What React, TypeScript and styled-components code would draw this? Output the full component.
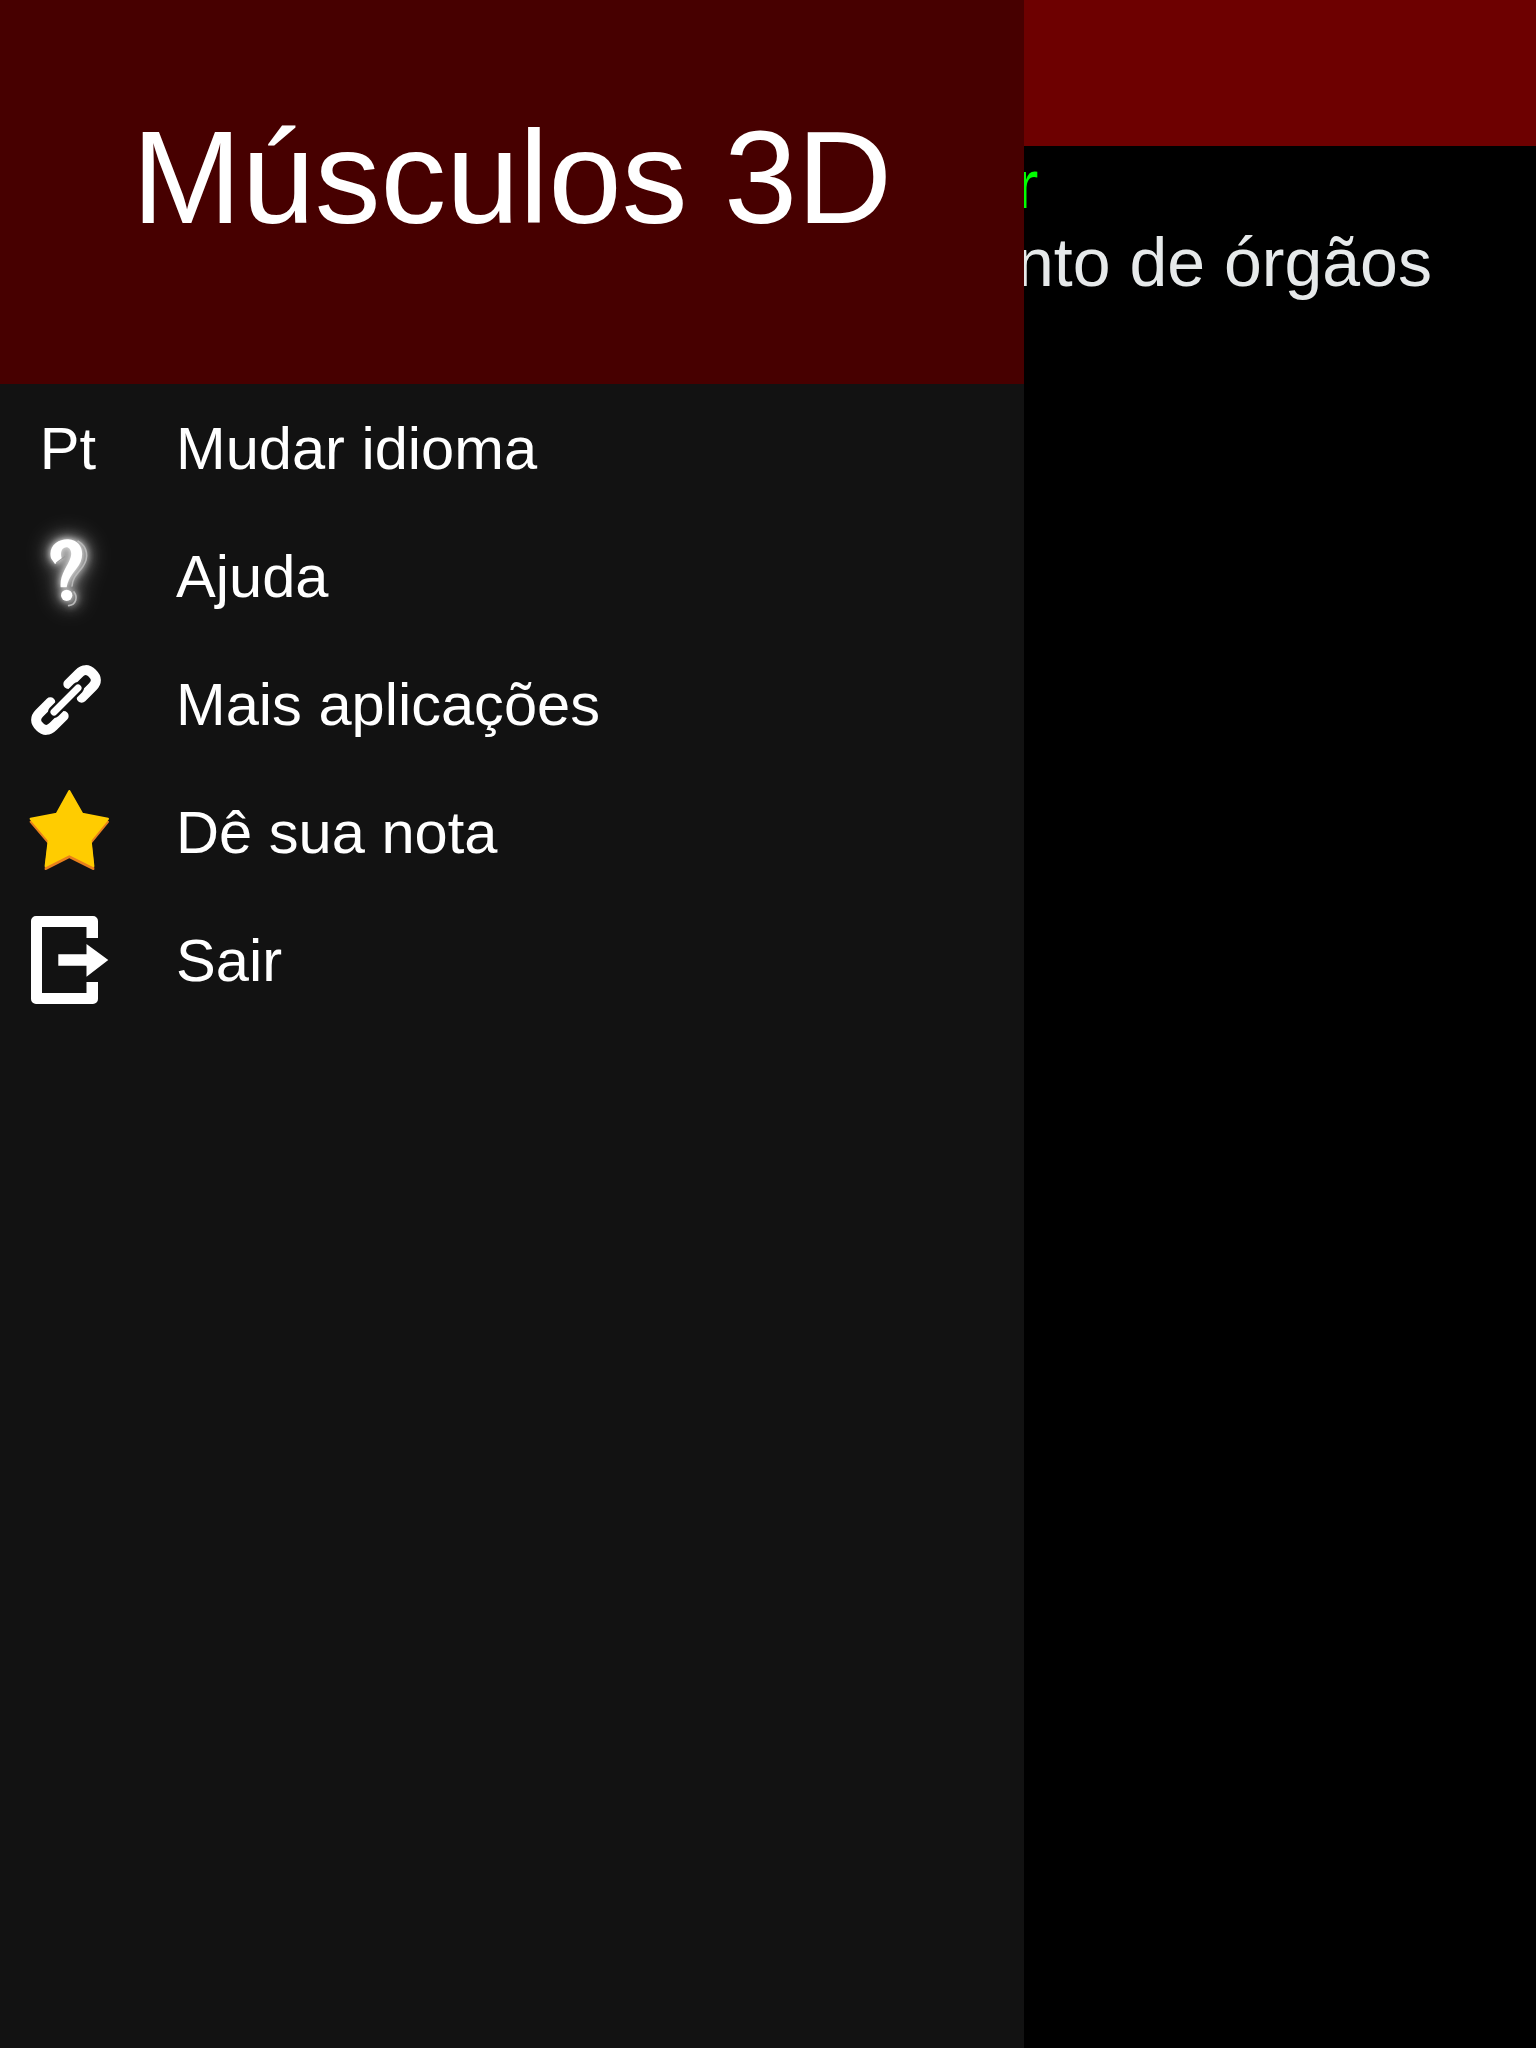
import { createGlobalStyle } from "styled-components";
import styled from "styled-components";

const GlobalStyle = createGlobalStyle`
  html, body {
    margin: 0;
    padding: 0;
    background: #000;
    font-family: "Liberation Sans", Arial, sans-serif;
  }
`;

const Page = styled.div`
  position: relative;
  width: 1536px;
  height: 2048px;
  overflow: hidden;
  background: #000;
`;

const TopBar = styled.div`
  height: 146px;
  background: #6d0000;
`;

const Content = styled.div`
  padding: 0 0 0 778px;
  font-size: 68px;
  white-space: nowrap;
`;

const Action = styled.div`
  color: #00ff00;
  margin: -1px 0 0 -4px;
`;

const Description = styled.div`
  color: #e6e9ea;
`;

const Drawer = styled.aside`
  position: absolute;
  top: 0;
  left: 0;
  width: 1024px;
  height: 2048px;
  background: #121212;
`;

const DrawerHeader = styled.header`
  height: 384px;
  background: #470000;
  color: #fff;
  font-size: 131.5px;
  text-align: center;
  padding-top: 102px;
  box-sizing: border-box;
  line-height: 152px;
`;

const Menu = styled.ul`
  list-style: none;
  margin: 0;
  padding: 0;
`;

const Row = styled.li`
  height: 128px;
  display: flex;
  align-items: center;
  padding-left: 24px;
  gap: 64px;
  color: #fff;
  font-size: 59.6px;
`;

const IconSlot = styled.div`
  width: 88px;
  height: 88px;
  display: flex;
  align-items: center;
  justify-content: center;
`;

const Glow = styled.svg`
  overflow: visible;
  filter: drop-shadow(0 0 3px rgba(255, 255, 255, 0.8)) drop-shadow(0 0 7px rgba(255, 255, 255, 0.6))
    drop-shadow(0 0 12px rgba(255, 255, 255, 0.35));
`;

function HelpIcon() {
  return (
    <Glow width="88" height="88" viewBox="72 96 264 264" fill="none">
      <path
        d="M234 124 C262 140 268 172 248 200 C234 220 218 230 216 258"
        stroke="#b8b8b8"
        strokeWidth="5"
        strokeLinecap="round"
      />
      <path d="M222 276 C234 292 228 314 206 317" stroke="#b8b8b8" strokeWidth="5" strokeLinecap="round" />
      <path
        d="M153 175 C143 135 178 116 205 118 C242 120 254 155 242 185 C230 212 206 225 200 262 L182 262 C178 225 203 200 212 172 C218 150 205 137 192 144 C180 150 182 170 187 178 L165 192 Z"
        fill="#fff"
      />
      <path d="M170 188 L194 170" stroke="#9a9a9a" strokeWidth="4" strokeLinecap="round" />
      <circle cx="200" cy="286" r="17" fill="#fff" />
    </Glow>
  );
}

function LinkIcon() {
  return (
    <svg width="88" height="88" viewBox="72 60 264 264" fill="none" strokeLinecap="round">
      <path
        d="M205 132 L236 101 C250 87 264 87 277 100 C291 113 291 127 278 140 L245 173"
        stroke="#fff"
        strokeWidth="30"
      />
      <path
        d="M191 228 L160 259 C146 273 132 273 119 260 C105 247 105 233 118 220 L151 187"
        stroke="#fff"
        strokeWidth="30"
      />
      <path d="M162 216 L234 144" stroke="#121212" strokeWidth="36" />
      <path d="M162 216 L234 144" stroke="#fff" strokeWidth="21" />
    </svg>
  );
}

const starPoints = "45.3,3 58.3,25.8 84,30.8 66.6,52 69.4,78 45.3,66 21.6,78 24.7,52 6.6,30.8 32.7,25.8";

function StarIcon() {
  return (
    <svg width="88" height="88" viewBox="0 0 88 88">
      <polygon points={starPoints} fill="#e8801c" stroke="#e8801c" strokeWidth="2" strokeLinejoin="round" transform="translate(0 3)" />
      <polygon points={starPoints} fill="#ffcc00" stroke="#ffcc00" strokeWidth="2" strokeLinejoin="round" />
    </svg>
  );
}

function ExitIcon() {
  return (
    <svg width="88" height="88" viewBox="0 0 88 88" fill="#fff">
      <path d="M12 0 H69 a5 5 0 0 1 5 5 V22 H62.5 V11 H18 V77 H62.5 V66 H74 V83 a5 5 0 0 1 -5 5 H12 a5 5 0 0 1 -5 -5 V5 a5 5 0 0 1 5 -5 Z" />
      <path d="M34.3 38.3 H62.5 V28 L84.3 44 L62.5 60.7 V49.7 H34.3 Z" />
    </svg>
  );
}

const items = [
  { label: "Mudar idioma", icon: <span>Pt</span> },
  { label: "Ajuda", icon: <HelpIcon /> },
  { label: "Mais aplicações", icon: <LinkIcon /> },
  { label: "Dê sua nota", icon: <StarIcon /> },
  { label: "Sair", icon: <ExitIcon /> },
];

export default function App() {
  return (
    <Page>
      <GlobalStyle />
      <TopBar />
      <Content>
        <Action>Comprar</Action>
        <Description>Movimento de órgãos</Description>
      </Content>
      <Drawer>
        <DrawerHeader>Músculos 3D</DrawerHeader>
        <Menu>
          {items.map((item) => (
            <Row key={item.label}>
              <IconSlot>{item.icon}</IconSlot>
              {item.label}
            </Row>
          ))}
        </Menu>
      </Drawer>
    </Page>
  );
}
